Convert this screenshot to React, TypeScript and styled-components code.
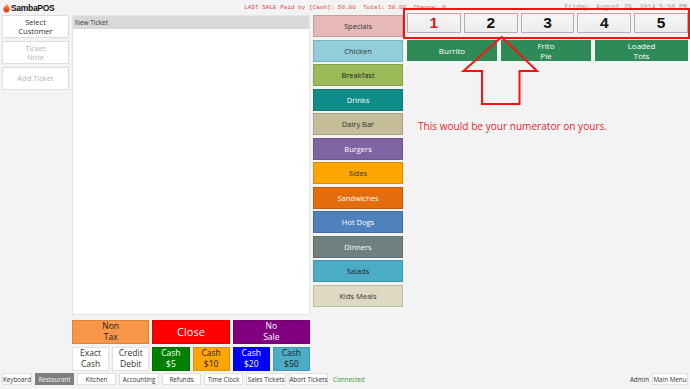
import styled, { createGlobalStyle } from "styled-components";

const GlobalStyle = createGlobalStyle`
  html, body {
    margin: 0;
    padding: 0;
    background: #f3f3f3;
  }
  body {
    font-family: "Open Sans", "Noto Sans", sans-serif;
    color: #222;
  }
`;

const Screen = styled.div`
  position: relative;
  width: 690px;
  height: 389px;
  display: flex;
  flex-direction: column;
  background: #f3f3f3;
  overflow: hidden;
`;

const Header = styled.div`
  height: 12px;
  display: grid;
  grid-template-columns: 1fr auto 1fr;
  align-items: center;
  padding: 0 3px;
`;

const Logo = styled.div`
  display: flex;
  align-items: center;
  gap: 1px;
  padding-top: 3px;
  font-family: "Liberation Sans", Arial, sans-serif;
  font-weight: bold;
  font-size: 8.5px;
  letter-spacing: -0.3px;
  color: #111;
`;

const LastSale = styled.div`
  font-family: "Liberation Mono", monospace;
  font-size: 6px;
  color: #e8454a;
  white-space: pre;
  padding-top: 2px;
`;

const DateText = styled.div`
  justify-self: end;
  font-family: "Liberation Mono", monospace;
  font-size: 6.6px;
  color: #9a9a9a;
  white-space: pre;
  padding-top: 1px;
`;

const Main = styled.div`
  display: flex;
  gap: 3px;
  padding: 0 2px;
  height: 359px;
`;

const LeftColumn = styled.div`
  width: 67px;
  padding-top: 3px;
  display: flex;
  flex-direction: column;
  gap: 3px;
`;

const SideButton = styled.div<{ $muted?: boolean }>`
  height: 23px;
  box-sizing: border-box;
  background: #fff;
  border: 1px solid #dedede;
  display: flex;
  align-items: center;
  justify-content: center;
  text-align: center;
  font-size: 7.5px;
  line-height: 9px;
  color: ${(p) => (p.$muted ? "#b4b4b4" : "#333")};
`;

const TicketColumn = styled.div`
  width: 238px;
  padding-top: 3px;
  display: flex;
  flex-direction: column;
  gap: 5px;
`;

const TicketPanel = styled.div`
  flex: 1;
  background: #fff;
  border: 1px solid #e4e4e4;
  box-sizing: border-box;
  display: flex;
  flex-direction: column;
`;

const TicketHeader = styled.div`
  height: 13px;
  background: #d9d9d9;
  font-size: 6.5px;
  color: #333;
  display: flex;
  align-items: center;
  padding-left: 2px;
`;

const ActionGrid = styled.div`
  display: grid;
  grid-template-columns: repeat(6, 1fr);
  grid-auto-rows: 24px;
  gap: 3px;
`;

const ActionButton = styled.div<{ $bg: string; $fg: string; $span?: number; $size?: number }>`
  grid-column: span ${(p) => p.$span ?? 1};
  box-sizing: border-box;
  background: ${(p) => p.$bg};
  color: ${(p) => p.$fg};
  border: 1px solid ${(p) => (p.$bg === "#fff" ? "#e2e2e2" : "rgba(0,0,0,0.12)")};
  display: flex;
  align-items: center;
  justify-content: center;
  text-align: center;
  font-size: ${(p) => p.$size ?? 8.5}px;
  line-height: 1.25;
  overflow: hidden;
`;

const CategoryColumn = styled.div`
  width: 90px;
  padding-top: 3px;
  margin-right: 1px;
  display: flex;
  flex-direction: column;
  gap: 2.5px;
`;

const CategoryButton = styled.div<{ $bg: string; $fg: string }>`
  height: 22px;
  box-sizing: border-box;
  background: ${(p) => p.$bg};
  color: ${(p) => p.$fg};
  border: 1px solid rgba(0, 0, 0, 0.14);
  display: flex;
  align-items: center;
  justify-content: center;
  font-size: 7.5px;
`;

const RightArea = styled.div`
  flex: 1;
  padding-top: 1px;
  display: flex;
  flex-direction: column;
`;

const NumberRow = styled.div`
  display: grid;
  grid-template-columns: repeat(5, 1fr);
  gap: 3px;
  height: 20px;
`;

const NumberButton = styled.div<{ $active?: boolean }>`
  box-sizing: border-box;
  background: linear-gradient(#f6f6f6, #ececec);
  border: 1px solid #adadad;
  display: flex;
  align-items: center;
  justify-content: center;
  font-family: "Liberation Sans", Arial, sans-serif;
  font-weight: bold;
  font-size: 15.5px;
  color: ${(p) => (p.$active ? "#e8161b" : "#111")};
`;

const ProductRow = styled.div`
  display: grid;
  grid-template-columns: 90px 90px 1fr;
  gap: 4px;
  height: 21px;
  margin-top: 7px;
`;

const ProductButton = styled.div`
  background: #2e8b57;
  color: #fff;
  display: flex;
  align-items: center;
  justify-content: center;
  text-align: center;
  font-size: 8px;
  line-height: 9.5px;
`;

const Annotation = styled.div`
  margin-top: 57px;
  padding-left: 11px;
  font-size: 10.1px;
  line-height: 16px;
  color: #e8262c;
`;

const Footer = styled.div`
  height: 12px;
  margin-top: 2px;
  padding: 0 2px;
  display: flex;
  align-items: center;
  gap: 3px;
`;

const FooterButton = styled.div<{ $active?: boolean; $w?: number }>`
  width: ${(p) => p.$w ?? 39}px;
  height: 12px;
  box-sizing: border-box;
  background: ${(p) => (p.$active ? "#7f7f7f" : "#fff")};
  color: ${(p) => (p.$active ? "#f0f0f0" : "#333")};
  border: 1px solid ${(p) => (p.$active ? "#7f7f7f" : "#e0e0e0")};
  display: flex;
  align-items: center;
  justify-content: center;
  font-size: 6.3px;
  white-space: nowrap;
`;

const Connected = styled.span`
  margin-left: 2px;
  font-size: 6.3px;
  color: #3a9a3a;
`;

const UserName = styled.span`
  margin-left: auto;
  font-size: 6.3px;
  color: #333;
`;

const Overlay = styled.svg`
  position: absolute;
  left: 0;
  top: 0;
  pointer-events: none;
`;

const categories = [
  { name: "Specials", bg: "#e6b9b8", fg: "#333" },
  { name: "Chicken", bg: "#92cddc", fg: "#333" },
  { name: "Breakfast", bg: "#9bbb59", fg: "#222" },
  { name: "Drinks", bg: "#0e8c8a", fg: "#fff" },
  { name: "Dairy Bar", bg: "#c4bd97", fg: "#333" },
  { name: "Burgers", bg: "#8064a2", fg: "#fff" },
  { name: "Sides", bg: "#ffa500", fg: "#333" },
  { name: "Sandwiches", bg: "#e46c0a", fg: "#fff" },
  { name: "Hot Dogs", bg: "#4f81bd", fg: "#fff" },
  { name: "Dinners", bg: "#708080", fg: "#fff" },
  { name: "Salads", bg: "#4bacc6", fg: "#222" },
  { name: "Kids Meals", bg: "#ddd9c3", fg: "#333" },
];

const footerItems = [
  { label: "Keyboard", w: 30 },
  { label: "Restaurant", w: 39, active: true },
  { label: "Kitchen", w: 39 },
  { label: "Accounting", w: 40 },
  { label: "Refunds", w: 39 },
  { label: "Time Clock", w: 39 },
  { label: "Sales Tickets", w: 40 },
  { label: "Abort Tickets", w: 39 },
];

const Flame = () => (
  <svg width="7" height="10" viewBox="0 0 10 13">
    <defs>
      <linearGradient id="fl" x1="0" y1="0" x2="0" y2="1">
        <stop offset="0" stopColor="#ff9a1e" />
        <stop offset="1" stopColor="#e8261c" />
      </linearGradient>
    </defs>
    <path
      d="M5 0 C6 3 9.5 4.5 9.5 8 C9.5 11 7.5 13 5 13 C2.3 13 0.5 11 0.5 8.2 C0.5 6 2 5 2.8 3.4 C3.3 4.8 3.8 5.4 4.4 5.6 C4.4 3.6 4.4 1.8 5 0Z"
      fill="url(#fl)"
    />
  </svg>
);

export default function App() {
  return (
    <>
      <GlobalStyle />
      <Screen>
        <Header>
          <Logo>
            <Flame />
            SambaPOS
          </Logo>
          <LastSale>LAST SALE Paid by [Cash]: 50.00  Total: 50.00  Change: 0</LastSale>
          <DateText>Friday, August 29, 2014 5:50 PM</DateText>
        </Header>

        <Main>
          <LeftColumn>
            <SideButton>
              Select
              <br />
              Customer
            </SideButton>
            <SideButton $muted>
              Ticket
              <br />
              Note
            </SideButton>
            <SideButton $muted>Add Ticket</SideButton>
          </LeftColumn>

          <TicketColumn>
            <TicketPanel>
              <TicketHeader>New Ticket</TicketHeader>
            </TicketPanel>
            <ActionGrid>
              <ActionButton $span={2} $bg="#f79646" $fg="#222">
                Non
                <br />
                Tax
              </ActionButton>
              <ActionButton $span={2} $bg="#ff0000" $fg="#fff" $size={11}>
                Close
              </ActionButton>
              <ActionButton $span={2} $bg="#800080" $fg="#fff">
                No
                <br />
                Sale
              </ActionButton>
              <ActionButton $bg="#fff" $fg="#333">
                Exact
                <br />
                Cash
              </ActionButton>
              <ActionButton $bg="#fff" $fg="#333">
                Credit
                <br />
                Debit
              </ActionButton>
              <ActionButton $bg="#008000" $fg="#fff">
                Cash
                <br />
                $5
              </ActionButton>
              <ActionButton $bg="#ffa500" $fg="#222">
                Cash
                <br />
                $10
              </ActionButton>
              <ActionButton $bg="#0000ff" $fg="#fff">
                Cash
                <br />
                $20
              </ActionButton>
              <ActionButton $bg="#4bacc6" $fg="#222">
                Cash
                <br />
                $50
              </ActionButton>
            </ActionGrid>
          </TicketColumn>

          <CategoryColumn>
            {categories.map((c) => (
              <CategoryButton key={c.name} $bg={c.bg} $fg={c.fg}>
                {c.name}
              </CategoryButton>
            ))}
          </CategoryColumn>

          <RightArea>
            <NumberRow>
              {[1, 2, 3, 4, 5].map((n) => (
                <NumberButton key={n} $active={n === 1}>
                  {n}
                </NumberButton>
              ))}
            </NumberRow>
            <ProductRow>
              <ProductButton>Burrito</ProductButton>
              <ProductButton>
                Frito
                <br />
                Pie
              </ProductButton>
              <ProductButton>
                Loaded
                <br />
                Tots
              </ProductButton>
            </ProductRow>
            <Annotation>This would be your numerator on yours.</Annotation>
          </RightArea>
        </Main>

        <Footer>
          {footerItems.map((f) => (
            <FooterButton key={f.label} $w={f.w} $active={f.active}>
              {f.label}
            </FooterButton>
          ))}
          <Connected>Connected</Connected>
          <UserName>Admin</UserName>
          <FooterButton $w={36}>Main Menu</FooterButton>
        </Footer>

        <Overlay width="690" height="389">
          <rect x="404" y="9" width="285" height="29" fill="none" stroke="#ff1010" strokeWidth="2" />
          <path
            d="M501.5 37 L537 71 L519.5 71 L519.5 104 L482 104 L482 71 L463.5 71 Z"
            fill="none"
            stroke="#ff1010"
            strokeWidth="2"
            strokeLinejoin="miter"
          />
        </Overlay>
      </Screen>
    </>
  );
}
